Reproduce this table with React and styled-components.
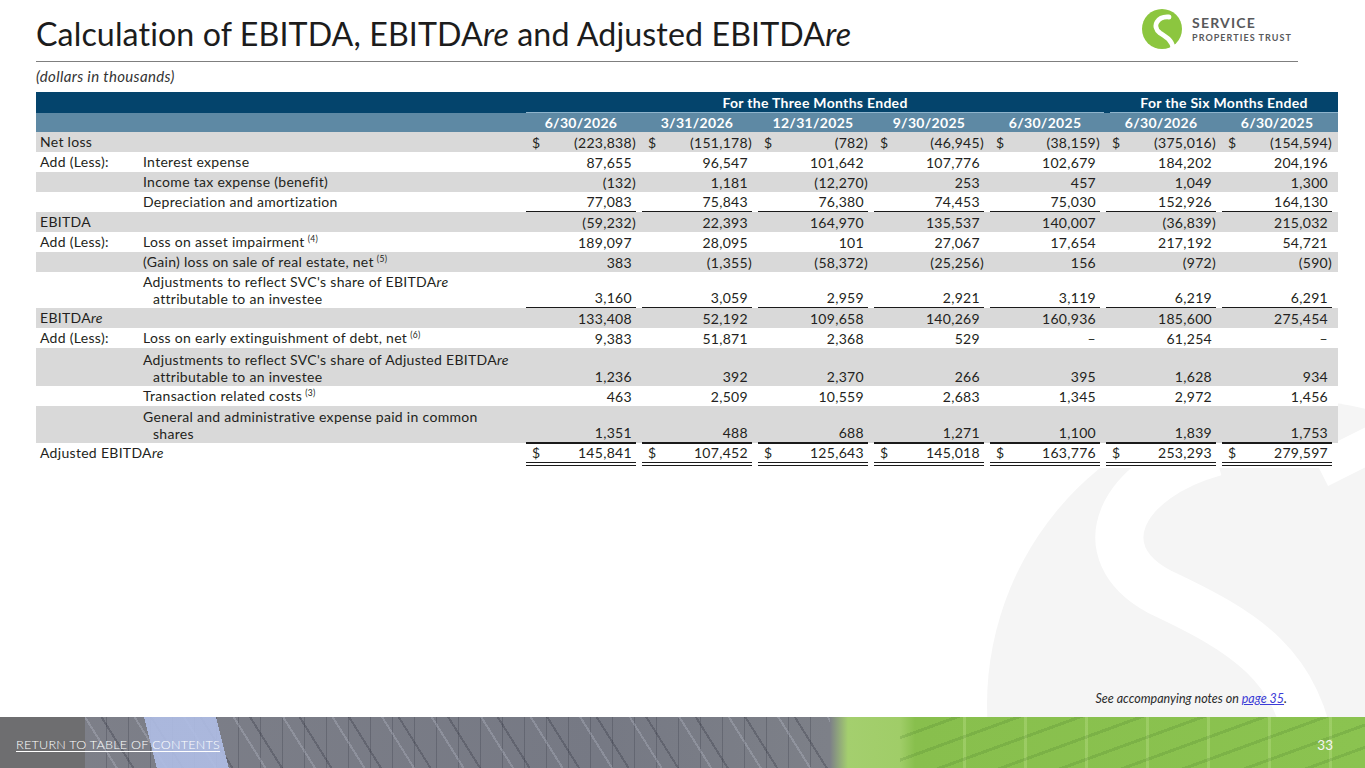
import React from 'react'
import styled, { createGlobalStyle } from 'styled-components'

const GlobalStyle = createGlobalStyle`
  html, body {
    margin: 0;
    padding: 0;
    background: #fff;
  }
  body {
    font-family: Lato, "Open Sans", "Liberation Sans", sans-serif;
    color: #231f20;
  }
`

const Page = styled.div`
  position: relative;
  width: 1365px;
  height: 768px;
  overflow: hidden;
  display: flex;
  flex-direction: column;
  background: #fff;
`

const Watermark = styled.svg`
  position: absolute;
  left: 985px;
  top: 380px;
  width: 380px;
  height: 388px;
  z-index: 0;
`

const Content = styled.div`
  position: relative;
  z-index: 1;
  flex: 1;
  display: flex;
  flex-direction: column;
`

const Header = styled.header`
  display: flex;
  align-items: center;
  justify-content: space-between;
  height: 58px;
  padding: 9px 73px 0 36px;
  box-sizing: border-box;
`

const Title = styled.h1`
  margin: 0;
  font-size: 32.2px;
  font-weight: 400;
  color: #1c1c1c;
  letter-spacing: 0.1px;
  white-space: nowrap;
`

const Em = styled.i`
  font-style: italic;
`

const Logo = styled.div`
  display: flex;
  align-items: center;
  gap: 10px;
  margin-top: -9px;
`

const LogoText = styled.div`
  display: flex;
  flex-direction: column;
  color: #58595b;
  font-weight: 700;
  line-height: 1;
`

const LogoBig = styled.span`
  font-size: 14px;
  letter-spacing: 1.2px;
`

const LogoSmall = styled.span`
  margin-top: 3px;
  font-size: 9px;
  letter-spacing: 1.05px;
`

const Rule = styled.hr`
  margin: 3px 67px 0 36px;
  border: 0;
  border-top: 1.5px solid #7f7f7f;
`

const Units = styled.div`
  margin: 5px 0 0 36px;
  font-size: 15px;
  font-style: italic;
  letter-spacing: 0.35px;
  color: #333;
  height: 22px;
`

const Table = styled.table`
  margin: 3px 0 0 36px;
  width: 1302px;
  border-collapse: collapse;
  table-layout: fixed;
  font-size: 14px;
  letter-spacing: 0.3px;
`

const HeadRow = styled.tr`
  background: ${p => (p.$top ? '#04446c' : '#5e89a4')};
  color: #fff;
  font-weight: 700;
  height: ${p => (p.$top ? '21px' : '19px')};
`

const HeadCell = styled.th`
  padding: 0 ${p => (p.$group ? '0' : '6px')} 0 0;
  font-weight: 700;
  text-align: center;
  vertical-align: bottom;
  line-height: 19px;
`

const Group = styled.div`
  margin: 0 ${p => (p.$last ? '0' : '2px')} 0 ${p => (p.$last ? '4px' : '0')};
  border-bottom: 1px solid #8fb4cc;
  line-height: 19px;
`

const Row = styled.tr`
  background: ${p => (p.$shade ? '#d9d9d9' : '#fff')};
`

const Label = styled.td`
  box-sizing: border-box;
  height: 20px;
  padding: ${p => 1 + (p.$extra || 0)}px 4px 1px ${p => (p.$sub ? '10px' : '4px')};
  text-indent: ${p => (p.$sub ? '-10px' : '0')};
  line-height: 17px;
  vertical-align: top;
  white-space: nowrap;
`

const Sup = styled.sup`
  font-size: 8.5px;
  line-height: 0;
  vertical-align: 5px;
  margin-left: 3px;
`

const ValueCell = styled.td`
  box-sizing: border-box;
  padding: 0 6px 0 0;
  vertical-align: bottom;
`

const Value = styled.div`
  display: flex;
  justify-content: space-between;
  padding-left: 6px;
  line-height: 17px;
  padding-bottom: 1px;
  border-top: ${p => (p.$top ? '1.5px solid #1a1a1a' : '0')};
  border-bottom: ${p =>
    p.$line === 'single' ? '1.5px solid #1a1a1a' : p.$line === 'double' ? '4px double #1a1a1a' : '0'};
  margin-bottom: ${p => (p.$line === 'double' ? '2px' : '0')};
`

const Paren = styled.span`
  visibility: hidden;
`

const Spacer = styled.div`
  flex: 1;
`

const Note = styled.div`
  align-self: flex-end;
  margin: 0 78px 11px 0;
  font-size: 12.5px;
  font-style: italic;
  color: #2a2a2a;

  & > a {
    color: #3b3bd6;
    text-decoration: underline;
  }
`

const Footer = styled.footer`
  position: relative;
  z-index: 1;
  height: 51px;
  display: flex;
  align-items: center;
  justify-content: space-between;
  padding: 4px 32px 0 16px;
  box-sizing: border-box;
  background:
    linear-gradient(to right, #6e6e70 0 85px, transparent 85px),
    linear-gradient(76deg, transparent 0 152px, rgba(176, 190, 230, 0.9) 152px 222px, transparent 222px) 0 0 / 250px 100% no-repeat,
    repeating-linear-gradient(58deg, transparent 0 26px, rgba(215, 220, 235, 0.22) 26px 28px, transparent 28px 40px, rgba(40, 42, 55, 0.28) 40px 42px) 85px 0 / 745px 100% no-repeat,
    repeating-linear-gradient(90deg, transparent 0 21px, rgba(55, 58, 70, 0.3) 21px 22px) 85px 0 / 745px 100% no-repeat,
    repeating-linear-gradient(160deg, transparent 0 18px, rgba(60, 110, 35, 0.18) 18px 21px) 900px 0 / 465px 100% no-repeat,
    repeating-linear-gradient(90deg, transparent 0 58px, rgba(190, 225, 140, 0.35) 58px 61px) 905px 0 / 460px 100% no-repeat,
    linear-gradient(to right, #7e8089 0, #767984 600px, #7d8088 830px, #a4cf6e 848px, #a0cd68 900px, #88bf4d 915px, #8bc350 1365px);
  color: #fff;
  font-size: 12.6px;
`

const TocLink = styled.a`
  color: #fff;
  font-weight: 300;
  letter-spacing: 0.25px;
  text-decoration: underline;
  text-underline-offset: 2px;
`

const PageNum = styled.span`
  font-size: 13.5px;
  color: #f4f4f4;
`

const cols = ['6/30/2026', '3/31/2026', '12/31/2025', '9/30/2025', '6/30/2025', '6/30/2026', '6/30/2025']

const rows = [
  { main: 'Net loss', shade: true, dollar: true, vals: ['(223,838)', '(151,178)', '(782)', '(46,945)', '(38,159)', '(375,016)', '(154,594)'] },
  { add: true, label: 'Interest expense', vals: ['87,655', '96,547', '101,642', '107,776', '102,679', '184,202', '204,196'] },
  { label: 'Income tax expense (benefit)', shade: true, vals: ['(132)', '1,181', '(12,270)', '253', '457', '1,049', '1,300'] },
  { label: 'Depreciation and amortization', line: 'single', vals: ['77,083', '75,843', '76,380', '74,453', '75,030', '152,926', '164,130'] },
  { main: 'EBITDA', shade: true, vals: ['(59,232)', '22,393', '164,970', '135,537', '140,007', '(36,839)', '215,032'] },
  { add: true, label: 'Loss on asset impairment', sup: '(4)', vals: ['189,097', '28,095', '101', '27,067', '17,654', '217,192', '54,721'] },
  { label: '(Gain) loss on sale of real estate, net', sup: '(5)', shade: true, vals: ['383', '(1,355)', '(58,372)', '(25,256)', '156', '(972)', '(590)'] },
  {
    label: ['Adjustments to reflect SVC\'s share of EBITDA', 'attributable to an investee'],
    line: 'single',
    vals: ['3,160', '3,059', '2,959', '2,921', '3,119', '6,219', '6,291'],
  },
  { main: 'EBITDA', re: true, shade: true, vals: ['133,408', '52,192', '109,658', '140,269', '160,936', '185,600', '275,454'] },
  { add: true, label: 'Loss on early extinguishment of debt, net', sup: '(6)', vals: ['9,383', '51,871', '2,368', '529', '–', '61,254', '–'] },
  {
    label: ['Adjustments to reflect SVC\'s share of Adjusted EBITDA', 'attributable to an investee'],
    shade: true,
    extra: 2,
    vals: ['1,236', '392', '2,370', '266', '395', '1,628', '934'],
  },
  { label: 'Transaction related costs', sup: '(3)', vals: ['463', '2,509', '10,559', '2,683', '1,345', '2,972', '1,456'] },
  {
    label: ['General and administrative expense paid in common', 'shares'],
    shade: true,
    line: 'single',
    plain: true,
    extra: 1,
    vals: ['1,351', '488', '688', '1,271', '1,100', '1,839', '1,753'],
  },
  { main: 'Adjusted EBITDA', re: true, dollar: true, line: 'double', vals: ['145,841', '107,452', '125,643', '145,018', '163,776', '253,293', '279,597'] },
]

function Num ({ v }) {
  const paren = v.endsWith(')')
  return (
    <span>
      {v}
      {!paren && <Paren>)</Paren>}
    </span>
  )
}

function SubLabel ({ row }) {
  if (Array.isArray(row.label)) {
    return (
      <>
        {row.label[0]}
        {!row.plain && <Em>re</Em>}
        <br />
        {row.label[1]}
      </>
    )
  }
  return (
    <>
      {row.label}
      {row.sup && <Sup>{row.sup}</Sup>}
    </>
  )
}

function LogoMark () {
  return (
    <svg width="40" height="40" viewBox="0 0 40 40">
      <circle cx="20" cy="20" r="20" fill="#8cc63f" />
      <path d="M27 8 C16 7, 9 17, 18 24 C24 28, 30 31, 31 39" fill="none" stroke="#fff" strokeWidth="4.8" strokeLinecap="round" />
    </svg>
  )
}

export default function App () {
  return (
    <>
      <GlobalStyle />
      <Page>
        <Watermark viewBox="985 380 380 388">
          <circle cx="1292" cy="705" r="305" fill="#f5f5f5" />
          <path d="M1215 452 C1120 478, 1085 552, 1160 592 C1245 632, 1300 665, 1312 760" fill="none" stroke="#fff" strokeWidth="48" />
          <path d="M1320 470 L1380 440" stroke="#fff" strokeWidth="36" />
        </Watermark>
        <Content>
          <Header>
            <Title>
              Calculation of EBITDA, EBITDA<Em>re</Em> and Adjusted EBITDA<Em>re</Em>
            </Title>
            <Logo>
              <LogoMark />
              <LogoText>
                <LogoBig>SERVICE</LogoBig>
                <LogoSmall>PROPERTIES TRUST</LogoSmall>
              </LogoText>
            </Logo>
          </Header>
          <Rule />
          <Units>(dollars in thousands)</Units>
          <Table>
            <colgroup>
              <col style={{ width: 107 }} />
              <col style={{ width: 383 }} />
              {cols.map((c, i) => <col key={i} style={{ width: 116 }} />)}
            </colgroup>
            <thead>
              <HeadRow $top>
                <HeadCell colSpan={2} />
                <HeadCell colSpan={5} $group><Group>For the Three Months Ended</Group></HeadCell>
                <HeadCell colSpan={2} $group><Group $last>For the Six Months Ended</Group></HeadCell>
              </HeadRow>
              <HeadRow>
                <HeadCell colSpan={2} />
                {cols.map((c, i) => <HeadCell key={i}>{c}</HeadCell>)}
              </HeadRow>
            </thead>
            <tbody>
              {rows.map((r, i) => (
                <Row key={i} $shade={r.shade}>
                  {r.main
                    ? <Label colSpan={2}>{r.main}{r.re && <Em>re</Em>}</Label>
                    : (
                      <>
                        <Label $extra={r.extra}>{r.add ? 'Add (Less):' : ''}</Label>
                        <Label $sub $extra={r.extra}><SubLabel row={r} /></Label>
                      </>
                      )}
                  {r.vals.map((v, j) => (
                    <ValueCell key={j}>
                      <Value $line={r.line} $top={r.line === 'double'}>
                        <span>{r.dollar ? '$' : ''}</span>
                        <Num v={v} />
                      </Value>
                    </ValueCell>
                  ))}
                </Row>
              ))}
            </tbody>
          </Table>
          <Spacer />
          <Note>See accompanying notes on <a href="#p35">page 35</a>.</Note>
        </Content>
        <Footer>
          <TocLink href="#toc">RETURN TO TABLE OF CONTENTS</TocLink>
          <PageNum>33</PageNum>
        </Footer>
      </Page>
    </>
  )
}
